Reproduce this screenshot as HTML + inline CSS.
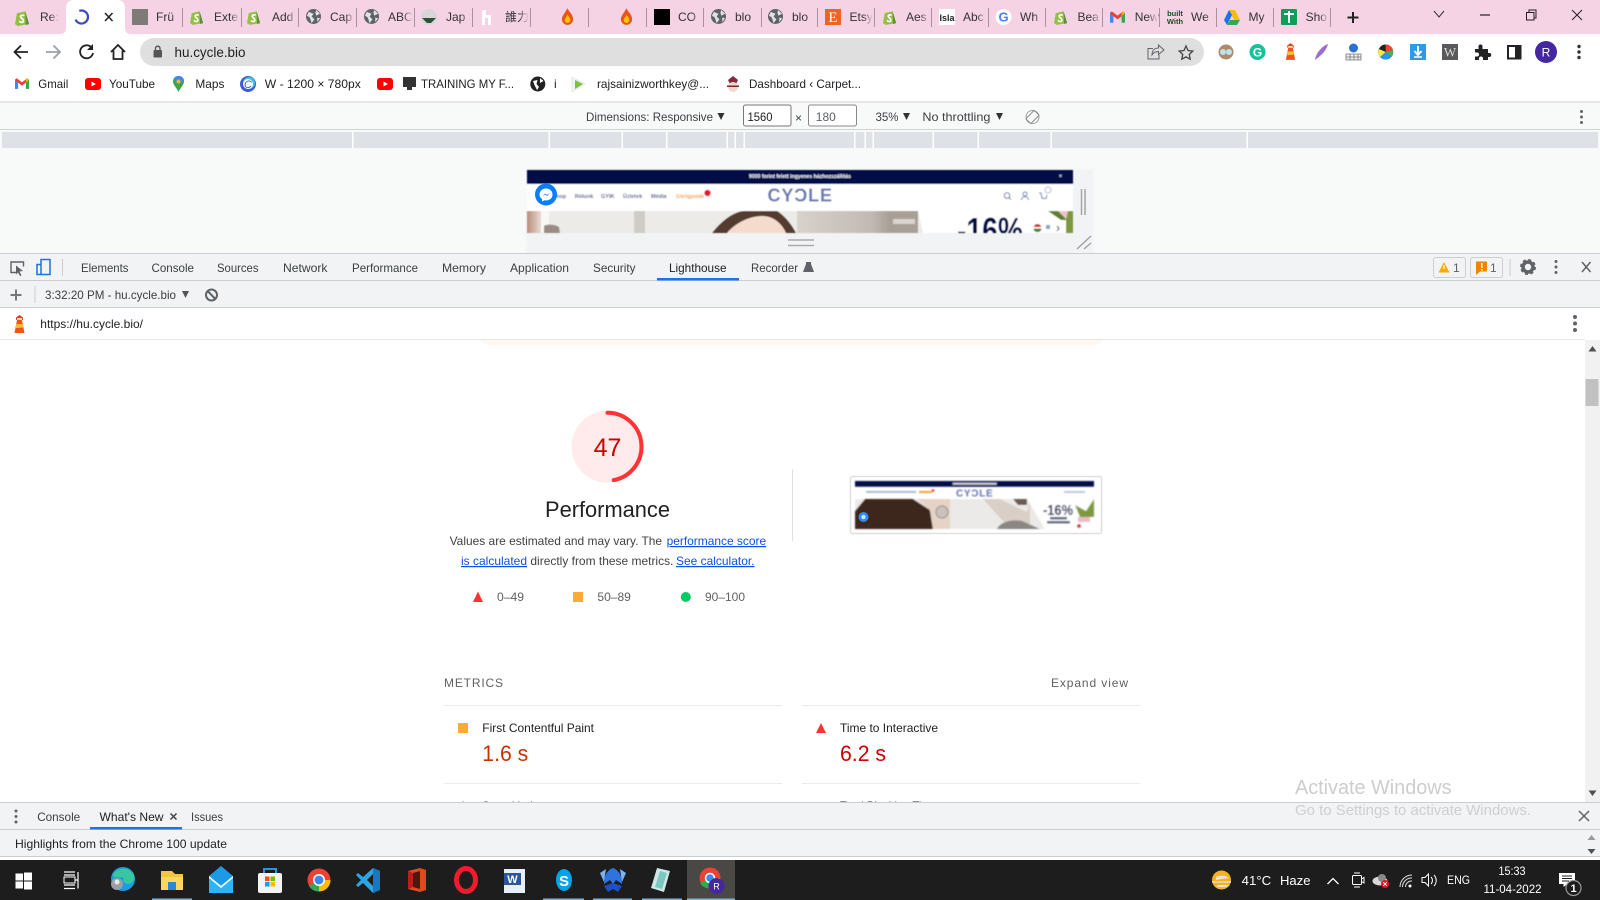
<!DOCTYPE html>
<html lang="en"><head><meta charset="utf-8"><title>Lighthouse</title>
<style>
html,body{margin:0;padding:0;background:#fff;width:1600px;height:900px;overflow:hidden}
svg{display:block;filter:blur(.3px)}
text{font-family:"Liberation Sans","Noto Sans CJK SC",sans-serif;font-size:12px;fill:#3c4043}
.k{fill:#202124}.g{fill:#5f6368}.tab{fill:#333}.t{fill:#fff}
</style></head><body>
<svg width="1600" height="900" viewBox="0 0 1600 900" xmlns="http://www.w3.org/2000/svg">
<defs>
<linearGradient id="fade"><stop offset="0" stop-color="#f5d3e4" stop-opacity="0"/><stop offset="1" stop-color="#f5d3e4"/></linearGradient>
<linearGradient id="heroL" x1="0" x2="1"><stop offset="0" stop-color="#b98d78"/><stop offset="1" stop-color="#e7dcd6"/></linearGradient>
<linearGradient id="heroR" x1="0" x2="1"><stop offset="0" stop-color="#d8d2cb"/><stop offset=".8" stop-color="#c2bab2"/><stop offset="1" stop-color="#a89f97"/></linearGradient>
<symbol id="shop" viewBox="0 0 16 18" overflow="visible"><path d="M2 4.500 11 2.500 15 16 3 18 0 16Z" fill="#95bf47"/><path d="M11 2.500 15 16 11.500 17Z" fill="#5e8e3e"/><path d="M10 7C8 6 5.500 6.800 6 8.500S9.500 10.500 9 12.800 5.500 14 4.500 13" fill="none" stroke="#fff" stroke-width="1.800"/></symbol>
<symbol id="globe" viewBox="0 0 16 16" overflow="visible"><circle cx="8" cy="8" r="8" fill="#5f6368"/><path d="M3 3 8 5 6 8 9 11 6 15 4 9 1 7ZM11 1 15 5 11 7 10 4ZM12 9 15 10 12 14Z" fill="#dfe1e5"/></symbol>
<symbol id="fire" viewBox="0 0 14 18" overflow="visible"><path d="M7 0C8 4 13 6 13 12A6 6 0 0 1 1 12C1 8 4 6 7 0Z" fill="#e8541a"/><path d="M7 7C8 9 10 10 10 13A3 3 0 0 1 4 13C4 11 6 10 7 7Z" fill="#ffc107"/></symbol>
<symbol id="yt" viewBox="0 0 16 12" overflow="visible"><rect width="16" height="12" rx="3" fill="#f00"/><path d="M6.500 3.500 11 6 6.500 8.500Z" fill="#fff"/></symbol>
<symbol id="lh" viewBox="0 0 14 18" overflow="visible"><path d="M4.500 5H9.500L12 18H2Z" fill="#f4511e"/><path d="M3.800 9H10.200L10.600 12.500 3.400 13Z" fill="#fbc02d"/><path d="M3.500 5V2.500L7 0 10.500 2.500V5Z" fill="#e53935"/><rect x="4.500" y="3" width="5" height="2" fill="#ffe082"/></symbol>
<symbol id="gmail" viewBox="0 0 16 12" overflow="visible"><path d="M0 1.500V12H3.500V5L8 8.500 12.500 5V12H16V1.500L14 0 8 4.500 2 0Z" fill="#ea4335"/><path d="M0 1.500V12H3.500V5Z" fill="#4285f4"/><path d="M12.500 5V12H16V1.500Z" fill="#34a853"/><path d="M14 0 16 1.500 12.500 5V2Z" fill="#fbbc04"/></symbol>
<filter id="b1"><feGaussianBlur stdDeviation=".4"/></filter>
<filter id="b2"><feGaussianBlur stdDeviation=".7"/></filter>
<clipPath id="heroClip"><rect x="527" y="211" width="546" height="22"/></clipPath>
<clipPath id="thumbClip"><rect x="855" y="499" width="239" height="30"/></clipPath>
</defs>

<!-- tab strip -->
<rect width="1600" height="34" fill="#f5d3e4"/>
<g fill="#a5949d">
<rect x="182" y="8" width="1" height="19"/><rect x="241" y="8" width="1" height="19"/><rect x="298" y="8" width="1" height="19"/><rect x="356" y="8" width="1" height="19"/><rect x="414" y="8" width="1" height="19"/><rect x="472" y="8" width="1" height="19"/><rect x="530" y="8" width="1" height="19"/><rect x="588" y="8" width="1" height="19"/><rect x="646" y="8" width="1" height="19"/><rect x="703" y="8" width="1" height="19"/><rect x="761" y="8" width="1" height="19"/><rect x="817" y="8" width="1" height="19"/><rect x="874" y="8" width="1" height="19"/><rect x="931" y="8" width="1" height="19"/><rect x="988" y="8" width="1" height="19"/><rect x="1045" y="8" width="1" height="19"/><rect x="1102" y="8" width="1" height="19"/><rect x="1159" y="8" width="1" height="19"/><rect x="1216" y="8" width="1" height="19"/><rect x="1273" y="8" width="1" height="19"/><rect x="1330" y="8" width="1" height="19"/>
</g>
<path d="M60 34C64 34 66 32 66 28V8C66 3 69 0 74 0H117C122 0 125 3 125 8V28C125 32 127 34 131 34Z" fill="#fff"/>
<use href="#shop" x="15" y="9" width="15" height="17"/>
<circle cx="81.500" cy="17" r="6.500" fill="none" stroke="#3c4bc0" stroke-width="2.200" stroke-dasharray="30 11" transform="rotate(-110 81.500 17)"/>
<path d="M105 13 112.500 21M112.500 13 105 21" stroke="#222" stroke-width="1.500"/>
<rect x="132" y="9" width="16" height="16" fill="#7d7a78"/>
<use href="#shop" x="190" y="9" width="14" height="16"/><use href="#shop" x="247" y="9" width="14" height="16"/>
<use href="#globe" x="306" y="9" width="15" height="15"/><use href="#globe" x="364" y="9" width="15" height="15"/>
<circle cx="429" cy="17" r="8" fill="#d6d6d6"/><path d="M422 18H436L431 23H427Z" fill="#2f4f37"/>
<path d="M482 10H486V15H491V25H488V18H485V25H482Z" fill="#fff"/>
<use href="#fire" x="561" y="8" width="13" height="17"/><use href="#fire" x="620" y="8" width="13" height="17"/>
<rect x="654" y="9" width="16" height="16" fill="#000"/>
<use href="#globe" x="711" y="9" width="15" height="15"/><use href="#globe" x="768" y="9" width="15" height="15"/>
<rect x="825" y="9" width="16" height="16" fill="#f1641e"/><text x="833" y="22" text-anchor="middle" style="font-family:'Liberation Serif',serif;font-size:15px;fill:#fff">E</text>
<use href="#shop" x="883" y="9" width="14" height="16"/>
<rect x="939" y="9" width="16" height="16" fill="#fff"/><text x="947" y="21" text-anchor="middle" style="font-size:9px;font-weight:bold;fill:#222">Isla</text>
<circle cx="1003.500" cy="17" r="8" fill="#fff"/><text x="1003.500" y="21.500" text-anchor="middle" style="font-size:13px;font-weight:bold;fill:#4285f4">G</text>
<use href="#shop" x="1054" y="9" width="14" height="16"/>
<use href="#gmail" x="1110" y="11" width="15" height="12"/>
<text x="1175" y="16" text-anchor="middle" style="font-size:7.500px;font-weight:bold;fill:#17501e">built</text><text x="1175" y="24" text-anchor="middle" style="font-size:7.500px;font-weight:bold;fill:#17501e">With</text>
<path d="M1229 10H1235L1240 20H1234Z" fill="#fbbc04"/><path d="M1229 10 1224 20 1227 25 1232 15Z" fill="#1a73e8"/><path d="M1227 25H1237L1240 20H1230Z" fill="#34a853"/>
<rect x="1281" y="9" width="16" height="16" rx="1" fill="#0f9d58"/><path d="M1284 14H1294M1289 11V23" stroke="#fff" stroke-width="2"/>
<text x="40" y="21" class="tab">Re:</text><text x="156" y="21" class="tab">Frü</text><text x="214" y="21" class="tab">Exte</text><text x="272" y="21" class="tab">Add</text><text x="330" y="21" class="tab">Cap</text><text x="388" y="21" class="tab">ABC</text><text x="446" y="21" class="tab">Jap</text><text x="505" y="21" class="tab">誰力</text><text x="678" y="21" class="tab">CO</text><text x="735" y="21" class="tab">blo</text><text x="792" y="21" class="tab">blo</text><text x="849.500" y="21" class="tab">Etsy</text><text x="906" y="21" class="tab">Aes</text><text x="963" y="21" class="tab">Abc</text><text x="1020" y="21" class="tab">Wh</text><text x="1077.500" y="21" class="tab">Bea</text><text x="1134.700" y="21" class="tab">New</text><text x="1191" y="21" class="tab">We</text><text x="1248.500" y="21" class="tab">My</text><text x="1305.600" y="21" class="tab">Sho</text>
<g fill="url(#fade)">
<rect x="50" y="8" width="9" height="19"/><rect x="171" y="8" width="10" height="19"/><rect x="230" y="8" width="10" height="19"/><rect x="287" y="8" width="10" height="19"/><rect x="345" y="8" width="10" height="19"/><rect x="403" y="8" width="10" height="19"/><rect x="461" y="8" width="10" height="19"/><rect x="519" y="8" width="10" height="19"/><rect x="692" y="8" width="10" height="19"/><rect x="750" y="8" width="10" height="19"/><rect x="806" y="8" width="10" height="19"/><rect x="863" y="8" width="10" height="19"/><rect x="920" y="8" width="10" height="19"/><rect x="977" y="8" width="10" height="19"/><rect x="1034" y="8" width="10" height="19"/><rect x="1091" y="8" width="10" height="19"/><rect x="1148" y="8" width="10" height="19"/><rect x="1205" y="8" width="10" height="19"/><rect x="1262" y="8" width="10" height="19"/><rect x="1319" y="8" width="10" height="19"/>
</g>
<path d="M1353 12V23M1347.500 17.500H1358.500" stroke="#222" stroke-width="2"/>
<path d="M1434 11 1439 17 1444 11" fill="none" stroke="#333"/>
<path d="M1480 15H1490" stroke="#222" stroke-width="1.200"/>
<path d="M1526.500 12.500H1534V20H1526.500ZM1529 12.500V10H1536V18H1534" fill="none" stroke="#222"/>
<path d="M1572 10 1582 20M1582 10 1572 20" stroke="#222"/>

<!-- toolbar -->
<rect y="34" width="1600" height="68" fill="#fff"/>
<path d="M28 52H15M21 45.500 14.500 52 21 58.500" fill="none" stroke="#222" stroke-width="1.800"/>
<path d="M46 52H60M53.500 45.500 60 52 53.500 58.500" fill="none" stroke="#9aa0a6" stroke-width="1.800"/>
<path d="M91.500 47.500A6.500 6.500 0 1 0 93 53" fill="none" stroke="#222" stroke-width="1.800"/><path d="M93 44V50H87Z" fill="#222"/>
<path d="M111 52 118 45 125 52M113.500 50.500V59H122.500V50.500" fill="none" stroke="#222" stroke-width="1.800"/>
<rect x="140" y="38" width="1064" height="28" rx="14" fill="#dfdfdf"/>
<rect x="153.500" y="50" width="8.500" height="7.500" rx="1" fill="#555"/><path d="M155.500 50V48A2.300 2.300 0 0 1 160 48V50" fill="none" stroke="#555" stroke-width="1.300"/>
<text x="174.500" y="57" textLength="71" lengthAdjust="spacingAndGlyphs" style="font-size:14px;fill:#202124">hu.cycle.bio</text>
<path d="M1153 48.500H1148V59H1159V55M1152 55C1152 50 1155 48 1158.500 48V45L1164 50 1158.500 54.500V51.500C1155.500 51.500 1153.500 52.500 1152 55Z" fill="none" stroke="#5f6368" stroke-width="1"/>
<path d="M1186 46 1188 50.500 1192.800 51.100 1189.300 54.400 1190.200 59.200 1186 56.900 1181.800 59.200 1182.700 54.400 1179.200 51.100 1184 50.500Z" fill="none" stroke="#444" stroke-width="1.300"/>
<circle cx="1226" cy="52" r="7.500" fill="#b08968"/><circle cx="1223" cy="52" r="3" fill="#bfe3ee"/><circle cx="1229" cy="52" r="3" fill="#bfe3ee"/>
<circle cx="1257.500" cy="52" r="8" fill="#15c39a"/><text x="1257.500" y="56.500" text-anchor="middle" style="font-size:12px;font-weight:bold;fill:#fff">G</text>
<use href="#lh" x="1284" y="43" width="13" height="17"/>
<path d="M1328 44C1322 46 1316 53 1315 60 1320 56 1326 52 1328 44Z" fill="#9c6bd3"/>
<circle cx="1353.500" cy="48" r="4.500" fill="#2a6fd4"/><path d="M1346 54H1361V60H1346ZM1346 57H1361M1350 54V60M1354 54V60M1358 54V60" fill="#eee" stroke="#777" stroke-width=".8"/>
<circle cx="1385.700" cy="52" r="7.500" fill="#222"/><path d="M1385.700 52V44.500A7.500 7.500 0 0 1 1393 50Z" fill="#f44336"/><path d="M1385.700 52 1393 50A7.500 7.500 0 0 1 1391 57Z" fill="#4caf50"/><path d="M1385.700 52 1391 57A7.500 7.500 0 0 1 1380 57Z" fill="#2196f3"/><path d="M1385.700 52 1380 57A7.500 7.500 0 0 1 1379 49Z" fill="#ffeb3b"/>
<rect x="1410" y="44" width="16" height="16" fill="#2e9be6"/><path d="M1418 46V54M1414.500 51 1418 55 1421.500 51" fill="none" stroke="#fff" stroke-width="2"/><path d="M1414 57H1422" stroke="#fff" stroke-width="1.500"/>
<rect x="1442" y="44" width="16" height="16" fill="#5a5a5a"/><text x="1450" y="56.500" text-anchor="middle" style="font-family:'Liberation Serif',serif;font-size:13px;fill:#ddd">W</text>
<path d="M1475 49H1478.500V46.500A2 2 0 0 1 1482.500 46.500V49H1488V53H1490A2.200 2.200 0 0 1 1490 57H1488V60H1483V58.500A2 2 0 0 0 1479 58.500V60H1475V56.500H1477A2 2 0 0 0 1477 52.500H1475Z" fill="#222"/>
<rect x="1508" y="46" width="12.500" height="12.500" fill="none" stroke="#222" stroke-width="2"/><rect x="1515" y="46" width="5.500" height="12.500" fill="#222"/>
<circle cx="1546" cy="52" r="11" fill="#4527a0"/><text x="1546" y="56.300" text-anchor="middle" style="font-size:12px;fill:#fff">R</text>
<g fill="#333"><circle cx="1579" cy="46.500" r="1.700"/><circle cx="1579" cy="52" r="1.700"/><circle cx="1579" cy="57.500" r="1.700"/></g>

<!-- bookmarks -->
<use href="#gmail" x="15" y="78" width="14" height="11"/><text x="38.300" y="88" textLength="30" lengthAdjust="spacingAndGlyphs" class="k">Gmail</text>
<use href="#yt" x="85" y="78" width="16" height="12"/><text x="109" y="88" textLength="46" lengthAdjust="spacingAndGlyphs" class="k">YouTube</text>
<path d="M178.500 76C175 76 173 78.500 173 81.500 173 85 176.500 87.500 178.500 92 180.500 87.500 184 85 184 81.500 184 78.500 182 76 178.500 76Z" fill="#34a853"/><path d="M178.500 76C176 76 174 77.500 173.500 79.500L181 83 184 81C184 78 182 76 178.500 76Z" fill="#4285f4"/><circle cx="178.500" cy="81.500" r="2" fill="#fbbc04"/>
<text x="195.400" y="88" textLength="29" lengthAdjust="spacingAndGlyphs" class="k">Maps</text>
<circle cx="248" cy="84" r="8" fill="#3f5bd8"/><circle cx="249" cy="83" r="6" fill="#3ac6dc"/><circle cx="248" cy="84" r="5" fill="#fff"/><text x="248" y="88" text-anchor="middle" style="font-size:11px;font-style:italic;fill:#3f5bd8">C</text>
<text x="264.800" y="88" textLength="96" lengthAdjust="spacingAndGlyphs" class="k">W - 1200 × 780px</text>
<use href="#yt" x="377" y="78" width="16" height="12"/>
<rect x="403" y="77" width="13" height="10" fill="#333"/><rect x="407" y="87" width="5" height="3" fill="#333"/>
<text x="421" y="88" textLength="93" lengthAdjust="spacingAndGlyphs" class="k">TRAINING MY F...</text>
<circle cx="537.800" cy="84" r="7.500" fill="#222"/><path d="M533 81 537.500 80 536.500 84 539 87 537 90 534.500 85ZM540 78 543.500 81 540 83Z" fill="#fff"/>
<text x="554" y="88" class="k">i</text>
<path d="M572 77 585 84 572 92Z" fill="#f3f3f3" stroke="#ddd" stroke-width=".6"/><path d="M575 80 583 84 575 89Z" fill="#7cc13e"/>
<text x="597" y="88" textLength="112" lengthAdjust="spacingAndGlyphs" class="k">rajsainizworthkey@...</text>
<path d="M733 76 738 80 736 84H730L728 80Z" fill="#8d2440"/><circle cx="733" cy="87" r="5" fill="#e9dcc3"/><rect x="727" y="85.500" width="12" height="1.500" fill="#7b2340"/>
<text x="749" y="88" textLength="112" lengthAdjust="spacingAndGlyphs" class="k">Dashboard ‹ Carpet...</text>

<!-- device toolbar -->
<rect y="102" width="1600" height="151" fill="#f8faf9"/>
<rect y="101.500" width="1600" height="1" fill="#cfd2d4"/>
<text x="586" y="121" textLength="127" lengthAdjust="spacingAndGlyphs">Dimensions: Responsive</text>
<path d="M717.500 113H724.500L721 120Z" fill="#333"/>
<rect x="743.500" y="105" width="47.500" height="21" rx="2" fill="#fff" stroke="#777"/>
<text x="747.500" y="121" textLength="25" lengthAdjust="spacingAndGlyphs" class="k">1560</text>
<text x="795" y="122" fill="#555">×</text>
<rect x="808.500" y="105" width="48" height="21" rx="2" fill="#fff" stroke="#888"/>
<text x="815.800" y="121" textLength="20" lengthAdjust="spacingAndGlyphs" class="g">180</text>
<text x="875.500" y="121" textLength="23" lengthAdjust="spacingAndGlyphs">35%</text>
<path d="M903 113H910L906.500 120Z" fill="#333"/>
<text x="922.400" y="121" textLength="68" lengthAdjust="spacingAndGlyphs">No throttling</text>
<path d="M996 113H1003L999.500 120Z" fill="#333"/>
<g transform="rotate(45 1032.500 117)"><rect x="1029" y="111" width="7" height="12" rx="1" fill="none" stroke="#888"/></g><circle cx="1032.500" cy="117" r="6.500" fill="none" stroke="#888" stroke-width=".8"/>
<g fill="#5f6368"><circle cx="1581.500" cy="111.500" r="1.500"/><circle cx="1581.500" cy="117" r="1.500"/><circle cx="1581.500" cy="122.500" r="1.500"/></g>
<rect y="129" width="1600" height="1" fill="#cfd2d4"/>
<rect x="2" y="132" width="1596" height="16" fill="#dee1e6"/>
<g fill="#fff">
<rect x="352" y="132" width="1.500" height="16"/><rect x="548.500" y="132" width="1.500" height="16"/><rect x="621.500" y="132" width="1.500" height="16"/><rect x="666" y="132" width="1.500" height="16"/><rect x="726.500" y="132" width="1.500" height="16"/><rect x="734.500" y="132" width="1.500" height="16"/><rect x="743.500" y="132" width="1.500" height="16"/><rect x="854" y="132" width="1.500" height="16"/><rect x="864.500" y="132" width="1.500" height="16"/><rect x="872.500" y="132" width="1.500" height="16"/><rect x="932.500" y="132" width="1.500" height="16"/><rect x="977.500" y="132" width="1.500" height="16"/><rect x="1050.500" y="132" width="1.500" height="16"/><rect x="1246.500" y="132" width="1.500" height="16"/>
</g>

<!-- device preview -->
<rect x="525" y="168" width="570" height="85" fill="#f6f7f7"/>
<rect x="527" y="170" width="566" height="83" fill="#f1f3f4"/>
<g filter="url(#b1)">
<rect x="527" y="170" width="546" height="14" fill="#000f47"/>
<text x="800" y="178" text-anchor="middle" textLength="102" lengthAdjust="spacingAndGlyphs" style="font-size:5.500px;font-weight:bold;fill:#fff">9000 forint felett ingyenes házhozszállítás</text>
<text x="1060.500" y="178" text-anchor="middle" style="font-size:6px;fill:#fff">×</text>
<rect x="527" y="184" width="546" height="27" fill="#fff"/>
<text x="556" y="198" style="font-size:5.500px;font-weight:bold;fill:#4d5a8f">hop</text><text x="574.700" y="198" style="font-size:5.500px;font-weight:bold;fill:#4d5a8f">Rólunk</text><text x="601" y="198" style="font-size:5.500px;font-weight:bold;fill:#4d5a8f">GYIK</text><text x="623" y="198" style="font-size:5.500px;font-weight:bold;fill:#4d5a8f">Üzletek</text><text x="651" y="198" style="font-size:5.500px;font-weight:bold;fill:#4d5a8f">Média</text><text x="676" y="198" textLength="28" lengthAdjust="spacingAndGlyphs" style="font-size:5.500px;font-weight:bold;fill:#f0a13c">Görögpolák</text>
<circle cx="707.500" cy="193" r="3.200" fill="#e8142c"/>
<text x="767.500" y="201.500" textLength="64.500" lengthAdjust="spacing" style="font-size:18px;font-weight:bold;fill:#6a78b4">CYƆLE</text>
<circle cx="1007" cy="195.500" r="2.800" fill="none" stroke="#6b79b3"/><path d="M1009 197.500 1011 199.500" stroke="#6b79b3"/>
<circle cx="1025" cy="194" r="2" fill="none" stroke="#6b79b3"/><path d="M1021.500 200C1021.500 195.500 1028.500 195.500 1028.500 200" fill="none" stroke="#6b79b3"/>
<path d="M1039 193H1041L1042 198.500H1046L1047 195" fill="none" stroke="#6b79b3"/><circle cx="1048" cy="190" r="3" fill="none" stroke="#9aa3c6" stroke-width=".8"/>
<g clip-path="url(#heroClip)">
<rect x="527" y="211" width="546" height="22" fill="#ecebe8"/>
<rect x="527" y="211" width="14" height="22" fill="url(#heroL)"/>
<rect x="541" y="211" width="8" height="22" fill="#f9f8f7"/>
<path d="M544 233V226C546 224 555 224 559 227L560 233Z" fill="#9a8c85"/>
<rect x="634" y="211" width="11" height="22" fill="#cfcbc5"/>
<path d="M712 233C722 220 735 211 745 211H777C785 216 792 225 796 233Z" fill="#543a2e"/>
<path d="M727 233C735 223 750 216 762 216 774 216 782 224 786 233Z" fill="#f4dccd"/>
<rect x="797" y="211" width="93" height="22" fill="url(#heroR)"/>
<rect x="890" y="211" width="28" height="22" fill="#a89f97"/>
<rect x="893" y="219" width="22" height="5" fill="#d9d4ce"/>
<path d="M918 211H1073V233H923Z" fill="#fff"/>
<text x="957" y="243" textLength="66" lengthAdjust="spacingAndGlyphs" style="font-size:36px;font-weight:bold;fill:#000f47">-16%</text>
<path d="M1048 211H1058L1068 220H1061Z" fill="#5f7f2a"/>
<path d="M1058 211H1070V220H1067Z" fill="#eec4c8"/>
<path d="M1068 211H1073V233H1066V220Z" fill="#7c9a3c"/>
<rect x="1030" y="220" width="35.500" height="13" fill="#fff"/>
<circle cx="1037.500" cy="228" r="4" fill="#d32f2f"/><rect x="1033.500" y="227" width="8" height="1.500" fill="#fff"/><path d="M1033.600 229H1041.400A4 4 0 0 1 1033.600 229Z" fill="#388e3c"/>
<rect x="1046" y="225" width="4" height="4" fill="#8aa4c8"/>
<path d="M1057 226 1059 228.500 1057 231" fill="none" stroke="#222"/>
</g>
</g>
<circle cx="546" cy="194.500" r="11" fill="#0a7cff"/><path d="M546 188.500C542.200 188.500 539.500 191.200 539.500 194.500 539.500 196.400 540.500 198 542 199V201.500L544.500 200.200C547.500 201 552.500 199.500 552.500 194.500 552.500 191.200 549.800 188.500 546 188.500Z" fill="#fff"/><path d="M542.500 196.500 545 193.500 547 195 549.500 192.800 547.300 196 545 194.500Z" fill="#0a7cff"/>
<path d="M788 240H814M788 245.500H814" stroke="#a9abad" stroke-width="1.500"/>
<path d="M1081.500 189V215M1085 189V215" stroke="#a3a5a7" stroke-width="1.500"/>
<path d="M1077 249 1091 236M1084 249 1091 243" stroke="#9a9c9e" stroke-width="1.200"/>

<!-- devtools tab bar -->
<rect y="253" width="1600" height="54" fill="#f1f3f4"/>
<rect y="253" width="1600" height="1" fill="#cacdd1"/>
<rect y="280" width="1600" height="1" fill="#cacdd1"/>
<rect y="307" width="1600" height="1" fill="#cacdd1"/>
<path d="M16 272.500H11V262H23.500V266.500" fill="none" stroke="#5f6368" stroke-width="1.400"/><path d="M16 265.500 23 271 19.500 271.500 21.500 275.500 20 276 18 272.500 16 274.500Z" fill="#5f6368"/>
<path d="M41 264.500H37V274.500H50V259.500H41V274.500" fill="none" stroke="#1a73e8" stroke-width="1.500"/>
<rect x="62" y="259" width="1" height="17" fill="#cacdd1"/>
<text x="81" y="272" textLength="47.500" lengthAdjust="spacingAndGlyphs">Elements</text>
<text x="151.500" y="272" textLength="42.500" lengthAdjust="spacingAndGlyphs">Console</text>
<text x="217" y="272" textLength="41.500" lengthAdjust="spacingAndGlyphs">Sources</text>
<text x="283" y="272" textLength="44.500" lengthAdjust="spacingAndGlyphs">Network</text>
<text x="352" y="272" textLength="66" lengthAdjust="spacingAndGlyphs">Performance</text>
<text x="442" y="272" textLength="44" lengthAdjust="spacingAndGlyphs">Memory</text>
<text x="510" y="272" textLength="59" lengthAdjust="spacingAndGlyphs">Application</text>
<text x="593" y="272" textLength="42.500" lengthAdjust="spacingAndGlyphs">Security</text>
<text x="669" y="272" textLength="57.500" lengthAdjust="spacingAndGlyphs" class="k">Lighthouse</text>
<text x="751" y="272" textLength="47" lengthAdjust="spacingAndGlyphs">Recorder</text>
<path d="M806 262H811V264L814 272H803L806 264Z" fill="#5f6368"/>
<rect x="657" y="278" width="82" height="2.500" fill="#1a73e8"/>
<rect x="1433.500" y="257.500" width="32" height="20" rx="2" fill="#f1f3f4" stroke="#cdd0d3"/>
<path d="M1444 262 1449.500 272.500H1438.500Z" fill="#f9ab00"/><rect x="1443.400" y="265" width="1.200" height="4" fill="#fff"/>
<text x="1453" y="272" class="g">1</text>
<rect x="1470.500" y="257.500" width="32" height="20" rx="2" fill="#f1f3f4" stroke="#cdd0d3"/>
<path d="M1476 261.500H1487V271.500H1480L1476 275Z" fill="#ea8600"/><rect x="1481" y="263" width="1.500" height="5" fill="#fff"/><rect x="1481" y="269" width="1.500" height="1.500" fill="#fff"/>
<text x="1490" y="272" class="g">1</text>
<rect x="1509.500" y="259" width="1" height="17" fill="#cacdd1"/>
<circle cx="1528" cy="267" r="5" fill="none" stroke="#5f6368" stroke-width="3.500"/><circle cx="1528" cy="267" r="7" fill="none" stroke="#5f6368" stroke-width="2" stroke-dasharray="3 2.500"/>
<g fill="#5f6368"><circle cx="1556" cy="261.500" r="1.500"/><circle cx="1556" cy="267" r="1.500"/><circle cx="1556" cy="272.500" r="1.500"/></g>
<path d="M1582 262 1590.500 272M1590.500 262 1582 272" stroke="#5f6368" stroke-width="1.500"/>
<path d="M16 289.500V300.500M10.500 295H21.500" stroke="#777" stroke-width="2"/>
<rect x="34.500" y="286" width="1" height="17" fill="#cacdd1"/>
<text x="45" y="299" textLength="131" lengthAdjust="spacingAndGlyphs">3:32:20 PM - hu.cycle.bio</text>
<path d="M182 291H189L185.500 298Z" fill="#555"/>
<circle cx="211.500" cy="295" r="5.500" fill="none" stroke="#5f6368" stroke-width="2"/><path d="M207.700 291 215.300 299" stroke="#5f6368" stroke-width="2"/>

<!-- url row -->
<rect y="308" width="1600" height="31" fill="#fff"/>
<use href="#lh" x="12.500" y="315" width="14" height="18"/>
<text x="40.300" y="328" textLength="102.700" lengthAdjust="spacingAndGlyphs" class="k">https://hu.cycle.bio/</text>
<g fill="#5f6368"><circle cx="1575" cy="317" r="2"/><circle cx="1575" cy="323.500" r="2"/><circle cx="1575" cy="330" r="2"/></g>
<rect y="339" width="1585" height="1" fill="#e5e7e9"/>

<!-- report -->
<rect y="340" width="1585" height="462" fill="#fff"/>
<path d="M480 340H1103C1100 344 1098 345 1094 345H490C486 345 483 344 480 340Z" fill="#fff8f1"/>
<rect x="1585" y="340" width="15" height="462" fill="#f1f1f1"/>
<path d="M1592.500 346 1596.500 351.500H1588.500Z" fill="#505050"/>
<rect x="1585.500" y="379" width="13" height="27" fill="#c1c1c1"/>
<path d="M1592.500 796 1596.500 790.500H1588.500Z" fill="#505050"/>

<circle cx="607.500" cy="446.700" r="36" fill="#ffebeb"/>
<circle cx="607.500" cy="446.700" r="34" fill="none" stroke="#f33" stroke-width="4" stroke-linecap="round" stroke-dasharray="100.400 300" transform="rotate(-90 607.500 446.700)"/>
<text x="607.500" y="456" text-anchor="middle" style="font-size:25px;fill:#c00">47</text>
<text x="545" y="517" textLength="125" lengthAdjust="spacingAndGlyphs" style="font-size:22px;fill:#212121">Performance</text>
<text x="449.600" y="545" textLength="212.500" lengthAdjust="spacingAndGlyphs" style="fill:#424242">Values are estimated and may vary. The</text>
<text x="666.600" y="545" textLength="99.500" lengthAdjust="spacingAndGlyphs" text-decoration="underline" style="fill:#0c50e7">performance score</text>
<text x="461" y="565" textLength="66" lengthAdjust="spacingAndGlyphs" text-decoration="underline" style="fill:#0c50e7">is calculated</text>
<text x="530.400" y="565" textLength="143" lengthAdjust="spacingAndGlyphs" style="fill:#424242">directly from these metrics.</text>
<text x="676" y="565" textLength="78.500" lengthAdjust="spacingAndGlyphs" text-decoration="underline" style="fill:#0c50e7">See calculator.</text>
<path d="M478 591.500 483 602H473Z" fill="#f33"/>
<text x="497" y="601" textLength="27" lengthAdjust="spacingAndGlyphs" style="fill:#616161">0–49</text>
<rect x="573" y="592" width="10" height="10" fill="#fa3"/>
<text x="597.400" y="601" textLength="33.500" lengthAdjust="spacingAndGlyphs" style="fill:#616161">50–89</text>
<circle cx="685.800" cy="597" r="5" fill="#0c6"/>
<text x="705" y="601" textLength="40" lengthAdjust="spacingAndGlyphs" style="fill:#616161">90–100</text>
<rect x="792" y="469" width="1" height="72" fill="#e0e0e0"/>

<rect x="850.500" y="476.500" width="251" height="57" rx="2" fill="#fff" stroke="#e0e0e0" stroke-width="1.500"/>
<g filter="url(#b2)">
<rect x="855" y="481" width="239" height="5.700" fill="#000f47"/>
<rect x="952.700" y="483" width="44" height="1.500" fill="#dfe3f3"/>
<rect x="866" y="491" width="50" height="1.800" fill="#aab0cc"/>
<rect x="919" y="491" width="13" height="2" fill="#f0a13c"/><circle cx="933" cy="490.500" r="1.300" fill="#e8142c"/>
<text x="956" y="496.500" textLength="36.700" lengthAdjust="spacing" style="font-size:10px;font-weight:bold;fill:#5f6eae">CYƆLE</text>
<rect x="1064" y="491" width="21" height="2" fill="#c2c7de"/>
<g clip-path="url(#thumbClip)">
<rect x="855" y="499" width="239" height="30" fill="#eceae8"/>
<path d="M855 529V511L865 499H913L930 510 933 529Z" fill="#3e281e"/>
<path d="M917 499H930L950 499V529H933L930 510Z" fill="#e6d3c5"/>
<circle cx="942" cy="512" r="6" fill="#c9c2bd" stroke="#8f8a86"/>
<path d="M983 499H1000L1027 512 1030 499V529H1010Z" fill="#d9cfc6"/>
<path d="M1013 499H1027V505H1018Z" fill="#6b5a50"/>
<path d="M997 529C1000 522 1012 519 1022 521L1040 529Z" fill="#8a8682"/>
<path d="M1027 499H1094V529H1045Z" fill="#fff"/>
<text x="1043" y="515" textLength="30" lengthAdjust="spacingAndGlyphs" style="font-size:15px;font-weight:bold;fill:#000f47">-16%</text>
<rect x="1050" y="517" width="17" height="2.500" fill="#555a78"/><rect x="1047" y="521" width="23" height="2.500" fill="#555a78"/>
<path d="M1075 505 1086 511 1094 499V517H1080Z" fill="#7c9a3c"/><path d="M1078 517H1090V522H1078Z" fill="#f0b8c2"/>
<circle cx="1079" cy="526" r="2" fill="#d32f2f"/>
</g>
</g>
<circle cx="863.500" cy="517" r="5" fill="#2b8cff"/><circle cx="863.500" cy="517" r="2.200" fill="#cfe5ff"/>

<text x="444" y="687" textLength="59" lengthAdjust="spacing" style="fill:#616161">METRICS</text>
<text x="1051" y="687" textLength="77" lengthAdjust="spacing" style="fill:#616161">Expand view</text>
<rect x="444" y="705" width="338" height="1" fill="#ebebeb"/><rect x="802" y="705" width="338" height="1" fill="#ebebeb"/>
<rect x="458" y="723" width="10" height="10" fill="#fa3"/>
<text x="482.300" y="732" textLength="111.700" lengthAdjust="spacingAndGlyphs" class="k">First Contentful Paint</text>
<text x="482.300" y="761" textLength="46" lengthAdjust="spacingAndGlyphs" style="font-size:22px;fill:#c33300">1.6 s</text>
<path d="M821 723 826 733H816Z" fill="#f33"/>
<text x="840" y="732" textLength="98" lengthAdjust="spacingAndGlyphs" class="k">Time to Interactive</text>
<text x="840" y="761" textLength="46" lengthAdjust="spacingAndGlyphs" style="font-size:22px;fill:#c00">6.2 s</text>
<rect x="444" y="783" width="338" height="1" fill="#ebebeb"/><rect x="802" y="783" width="338" height="1" fill="#ebebeb"/>
<path d="M463 801 466 806H460Z" fill="#f33"/>
<text x="482.300" y="810" textLength="62" lengthAdjust="spacingAndGlyphs" class="k">Speed Index</text>
<text x="840" y="810" textLength="97" lengthAdjust="spacingAndGlyphs" class="k">Total Blocking Time</text>

<!-- drawer -->
<rect y="802" width="1600" height="55" fill="#f1f3f4"/>
<rect y="802" width="1600" height="1" fill="#cacdd1"/>
<rect y="829" width="1600" height="1" fill="#cacdd1"/>
<rect y="856" width="1600" height="1" fill="#cacdd1"/>
<rect y="857" width="1600" height="3" fill="#fff"/>
<g fill="#5f6368"><circle cx="16" cy="811" r="1.500"/><circle cx="16" cy="816.500" r="1.500"/><circle cx="16" cy="822" r="1.500"/></g>
<text x="37.200" y="821" textLength="43" lengthAdjust="spacingAndGlyphs">Console</text>
<text x="99.500" y="821" textLength="64" lengthAdjust="spacingAndGlyphs" class="k">What's New</text>
<path d="M170.500 813.500 176.500 819.500M176.500 813.500 170.500 819.500" stroke="#444" stroke-width="1.500"/>
<text x="191" y="821" textLength="32" lengthAdjust="spacingAndGlyphs">Issues</text>
<rect x="90" y="827" width="92" height="2.500" fill="#1a73e8"/>
<text x="15" y="848" textLength="212" lengthAdjust="spacingAndGlyphs" class="k">Highlights from the Chrome 100 update</text>
<path d="M1579 811 1589 821M1589 811 1579 821" stroke="#5f6368" stroke-width="1.500"/>
<path d="M1591.500 835 1595.500 840H1587.500Z" fill="#9a9a9a"/><path d="M1591.500 854 1595.500 849H1587.500Z" fill="#505050"/>

<!-- activate watermark -->
<text x="1295" y="794" textLength="156.500" lengthAdjust="spacingAndGlyphs" style="font-size:20px;fill:#cdcdcd">Activate Windows</text>
<text x="1295" y="815" textLength="236" lengthAdjust="spacingAndGlyphs" style="font-size:14.500px;fill:#cdcfd1">Go to Settings to activate Windows.</text>

<!-- taskbar -->
<rect y="860" width="1600" height="40" fill="#1d1d1e"/>
<rect x="687" y="860" width="48" height="40" fill="#4a4845"/>
<g fill="#76b9ed"><rect x="152" y="898.500" width="40" height="1.500"/><rect x="543" y="898.500" width="41" height="1.500"/><rect x="593" y="898.500" width="39" height="1.500"/><rect x="642" y="898.500" width="40" height="1.500"/><rect x="687" y="898.500" width="48" height="1.500"/></g>
<g fill="#fff"><rect x="15.500" y="873.500" width="7.500" height="7"/><rect x="24" y="872.500" width="8" height="8"/><rect x="15.500" y="881.500" width="7.500" height="7"/><rect x="24" y="881.500" width="8" height="8"/></g>
<path d="M64 875H75M64 885H75M64 872H75M64 888.500H75M78 872V888.500M75 880H78" fill="none" stroke="#fff" stroke-width="1.200"/><rect x="64" y="877" width="11" height="6" fill="none" stroke="#fff"/>
<circle cx="123" cy="879" r="12" fill="#1b9de2"/><path d="M113 875C116 868 127 866 133 873 136 877 134 884 128 884 124 884 122 881 124 878 119 876 114 879 113 875Z" fill="#37c6a0"/><circle cx="117" cy="884" r="6" fill="#9aa0a6"/><circle cx="117" cy="882" r="2.500" fill="#e8eaed"/>
<path d="M161 871H172L175 874H183V890H161Z" fill="#f5c542"/><rect x="161" y="877" width="22" height="13" fill="#ffd75e"/><rect x="168" y="882" width="8" height="8" fill="#2b88d8"/>
<path d="M209 876 221 866 233 876V893H209Z" fill="#1d9ae5"/><path d="M209 876 221 885 233 876V893H209Z" fill="#2fb4f4"/><path d="M209 876 221 886 233 876V878L221 888 209 878Z" fill="#fff"/>
<rect x="258" y="873" width="24" height="20" rx="2" fill="#f3f3f3"/><path d="M264 873V869H276V873" fill="none" stroke="#1d9ae5" stroke-width="2"/><rect x="265" y="876.500" width="4.500" height="4.500" fill="#f25022"/><rect x="270.500" y="876.500" width="4.500" height="4.500" fill="#7fba00"/><rect x="265" y="882" width="4.500" height="4.500" fill="#00a4ef"/><rect x="270.500" y="882" width="4.500" height="4.500" fill="#ffb900"/>
<circle cx="319" cy="880" r="11.500" fill="#ea4335"/><path d="M319 880 309 886A11.500 11.500 0 0 0 319 891.500L329 885Z" fill="#34a853"/><path d="M319 880 330.500 880A11.500 11.500 0 0 1 319 891.500Z" fill="#fbbc04"/><circle cx="319" cy="880" r="6" fill="#fff"/><circle cx="319" cy="880" r="4.500" fill="#4285f4"/>
<path d="M373 868 380 871V890L373 893 363 883 358 887 356 885 361 880 356 875 358 873 363 877Z" fill="#2aa6e6"/><path d="M373 874 367 880 373 886Z" fill="#1d1d1e"/><path d="M373 868 380 871V890L373 893Z" fill="#1778c2"/>
<path d="M408 871 420 868 426 870V890L420 892 408 889Z" fill="#dd4a1d"/><path d="M413 873 420 871V889L413 887Z" fill="#4a1a12"/><path d="M408 871 413 873V887L408 889Z" fill="#b5221a"/>
<ellipse cx="466" cy="880" rx="9.500" ry="11.500" fill="none" stroke="#f01b2c" stroke-width="5"/>
<rect x="504" y="869" width="21" height="24" fill="#e8eef8"/><rect x="504" y="873" width="17" height="12" fill="#2b579a"/><text x="512.500" y="883" text-anchor="middle" style="font-size:11px;font-weight:bold;fill:#fff">W</text>
<path d="M556 880A8 11 0 1 1 572 880 8 11 0 1 1 556 880Z" fill="#00a4e8"/><text x="564" y="886" text-anchor="middle" style="font-size:15px;font-weight:bold;fill:#fff">S</text>
<path d="M613 868C607 870 604 876 604 884L610 880 613 884 616 880 622 884C622 876 619 870 613 868Z" fill="#2e74e0"/><path d="M606 869 600 873 604 882ZM620 869 626 873 622 882Z" fill="#7ab2f2"/><path d="M604 886 613 883 622 886 618 892 613 889 608 892Z" fill="#1f4fc4"/>
<path d="M657 868 670 871 664 892 651 888Z" fill="#cfe8e5"/><path d="M660 871 667 873 662 889 655 887Z" fill="#7bc8c3"/>
<circle cx="710" cy="878" r="10.500" fill="#ea4335"/><path d="M710 878 700 883A10.500 10.500 0 0 0 708 888.300Z" fill="#34a853"/><path d="M710 878 720 878A10.500 10.500 0 0 1 711 888Z" fill="#fbbc04"/><circle cx="710" cy="878" r="4.500" fill="#4285f4" stroke="#fff" stroke-width="1.500"/>
<circle cx="716.500" cy="886" r="8" fill="#4527a0"/><text x="716.500" y="889.500" text-anchor="middle" style="font-size:9px;fill:#fff">R</text>

<circle cx="1221.500" cy="880" r="9.500" fill="#f7b21a"/><path d="M1212 882H1231" stroke="#ddd" stroke-width="1.500"/><path d="M1216 877C1220 875 1226 875 1229 878L1216 880ZM1218 885H1230L1226 887H1216Z" fill="#e8e3d8"/>
<text x="1241.700" y="885" textLength="29.500" lengthAdjust="spacingAndGlyphs" style="font-size:13px;fill:#fff">41°C</text>
<text x="1280" y="885" textLength="30.500" lengthAdjust="spacingAndGlyphs" style="font-size:13px;fill:#fff">Haze</text>
<path d="M1327.500 884 1333 878.500 1338.500 884" fill="none" stroke="#fff" stroke-width="1.300"/>
<rect x="1352.500" y="875.500" width="9" height="9" rx="1" fill="none" stroke="#fff"/><path d="M1361.500 879 1364 877.500V883L1361.500 881.500M1354 873H1360M1354 887H1360" fill="none" stroke="#fff"/>
<ellipse cx="1380" cy="881" rx="7.500" ry="4.500" fill="#d8d8d8"/><circle cx="1382" cy="878" r="4" fill="#8a8a8a"/><circle cx="1385" cy="884" r="4" fill="#e81123"/><path d="M1383.300 882.300 1386.700 885.700M1386.700 882.300 1383.300 885.700" stroke="#fff"/>
<path d="M1400 887A12 12 0 0 1 1412 875M1402.500 887A9 9 0 0 1 1412 878M1405.500 887A6 6 0 0 1 1412 881" fill="none" stroke="#ddd"/><circle cx="1410" cy="886" r="1.500" fill="#fff"/>
<path d="M1422 877.500H1425L1428.500 874V886L1425 882.500H1422Z" fill="none" stroke="#fff"/><path d="M1431 877A5 5 0 0 1 1431 884M1434 875A8 8 0 0 1 1434 886" fill="none" stroke="#fff"/>
<text x="1447" y="884" textLength="23" lengthAdjust="spacingAndGlyphs" class="t">ENG</text>
<text x="1498.500" y="875" textLength="27" lengthAdjust="spacingAndGlyphs" class="t">15:33</text>
<text x="1483.500" y="893" textLength="58" lengthAdjust="spacingAndGlyphs" class="t">11-04-2022</text>
<path d="M1559 873H1575V884H1567L1563.500 887V884H1559Z" fill="#fff"/><path d="M1562 876H1572M1562 878.500H1572M1562 881H1569" stroke="#1d1d1e"/>
<circle cx="1573.500" cy="888" r="7.500" fill="#1d1d1e" stroke="#9a9a9a" stroke-width="1.200"/><text x="1573.500" y="892" text-anchor="middle" style="font-size:11px;font-weight:bold;fill:#fff">1</text>
</svg>
</body></html>
